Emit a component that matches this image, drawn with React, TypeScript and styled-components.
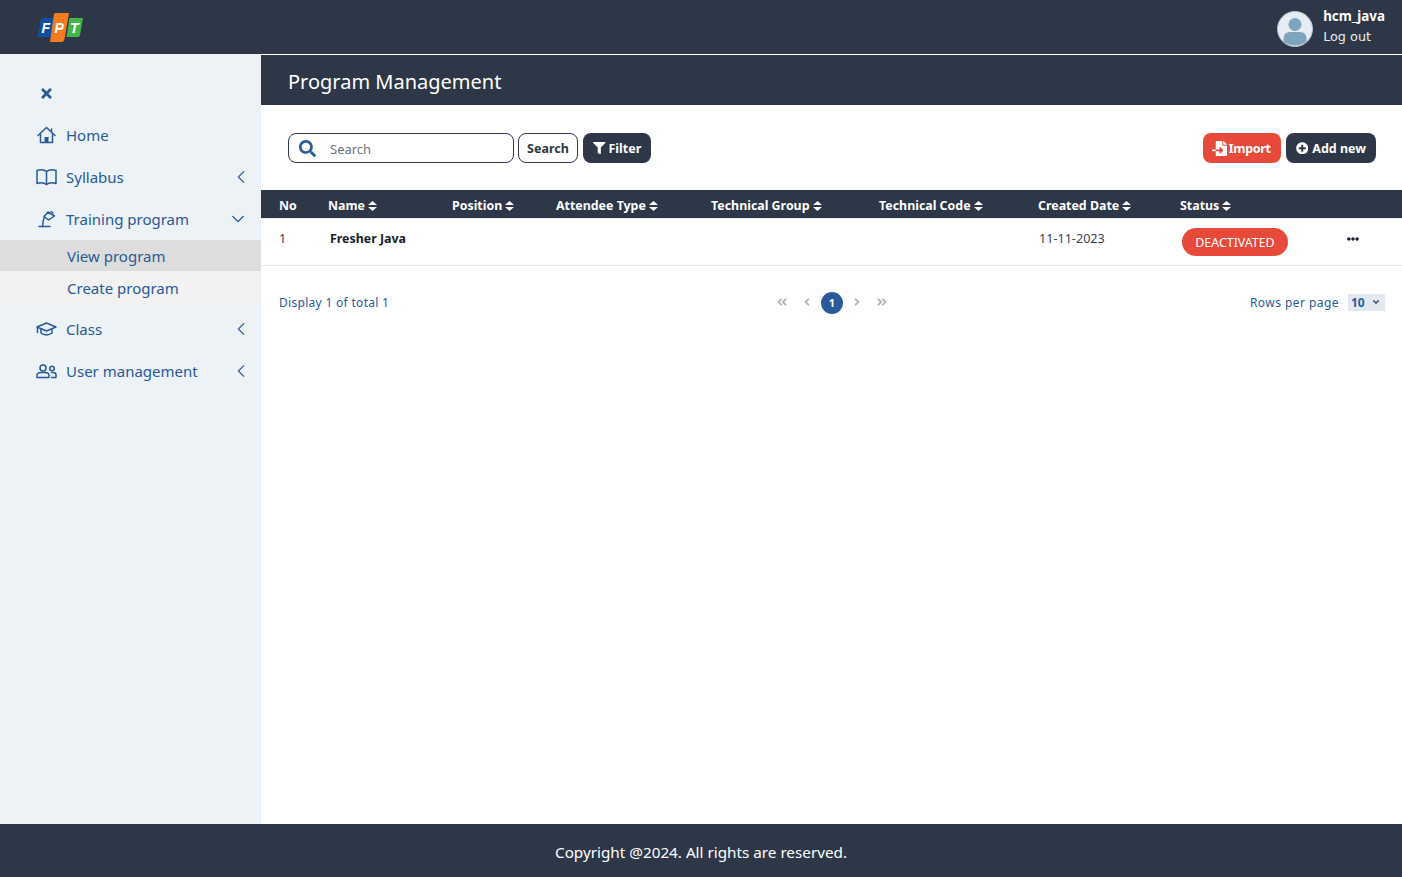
import React from 'react';
import styled, { createGlobalStyle } from 'styled-components';
import { BsChevronLeft, BsChevronDown } from 'react-icons/bs';
import {
    FaSearch,
    FaFilter,
    FaFileImport,
    FaPlusCircle,
    FaTimes,
    FaEllipsisH,
    FaAngleDoubleLeft,
    FaAngleDoubleRight,
    FaAngleLeft,
    FaAngleRight,
    FaAngleDown,
} from 'react-icons/fa';

const NAVY = '#2d3748';
const BLUE = '#285a98';
const RED = '#e74a3b';

const GlobalStyle = createGlobalStyle`
    * { box-sizing: border-box; }
    html, body { margin: 0; padding: 0; height: 100%; }
    body { font-family: "Noto Sans", "Open Sans", sans-serif; background: #fff; }
    #root { height: 100%; }
`;

const Page = styled.div`
    height: 877px;
    display: grid;
    grid-template-rows: 54px 1fr 53px;
    overflow: hidden;
`;

const Header = styled.header`
    background: ${NAVY};
    display: flex;
    align-items: center;
    justify-content: space-between;
    padding: 0 17px 0 37px;
`;

const UserBox = styled.div`
    display: flex;
    align-items: center;
    gap: 10px;
    padding-top: 3px;
`;

const UserText = styled.div`
    display: flex;
    flex-direction: column;
    gap: 1px;
    color: #fff;
`;

const UserName = styled.span`
    font-size: 13.4px;
    font-weight: 700;
    line-height: 19px;
    margin-top: -4px;
`;

const LogOut = styled.span`
    font-family: "DejaVu Sans", sans-serif;
    font-size: 12.8px;
    line-height: 19px;
    color: #e8ebef;
`;

const Body = styled.div`
    display: grid;
    grid-template-columns: 261px 1fr;
    min-height: 0;
`;

const Sidebar = styled.aside`
    background: #edf2f7;
    padding-top: 19px;
    color: ${BLUE};
`;

const CloseButton = styled.div`
    height: 41px;
    padding-left: 39px;
    display: flex;
    align-items: center;
    font-size: 15px;
`;

const NavRow = styled.div`
    height: 42px;
    display: flex;
    align-items: center;
    padding: 0 16px 0 36px;
    font-size: 15px;
`;

const SubGroup = styled.div`
    margin-bottom: 5px;
`;

const NavIcon = styled.span`
    width: 30px;
    display: flex;
    align-items: center;
`;

const Glyph = styled.svg.attrs({
    width: 21,
    height: 18,
    viewBox: '0 0 21 18',
    fill: 'none',
    stroke: 'currentColor',
    strokeWidth: 1.5,
    strokeLinecap: 'round',
    strokeLinejoin: 'round',
})`
    display: block;
`;

const NavLabel = styled.span`
    flex: 1;
`;

const Caret = styled.span<{ $collapsed?: boolean }>`
    display: flex;
    align-items: center;
    font-size: 14px;
    margin-right: ${({ $collapsed }) => ($collapsed ? '-3px' : '0')};
    svg { stroke: currentColor; stroke-width: 0.6; }
`;

const SubRow = styled.div<{ $active?: boolean }>`
    height: ${({ $active }) => ($active ? '31px' : '32px')};
    display: flex;
    align-items: center;
    padding: ${({ $active }) => ($active ? '0' : '2px')} 0 0 67px;
    font-size: 15px;
    background: ${({ $active }) => ($active ? '#dddddd' : '#f2f2f2')};
`;

const Main = styled.main`
    display: flex;
    flex-direction: column;
    min-width: 0;
    background: #fff;
`;

const TitleBar = styled.div`
    margin-top: 1px;
    height: 50px;
    background: ${NAVY};
    color: #fff;
    display: flex;
    align-items: center;
    padding: 3px 0 0 27px;
    font-size: 20px;
`;

const Toolbar = styled.div`
    height: 85px;
    display: flex;
    align-items: flex-start;
    justify-content: space-between;
    padding: 28px 26px 0 27px;
`;

const ToolGroup = styled.div`
    display: flex;
    gap: 5px;
`;

const SearchBox = styled.label`
    width: 226px;
    height: 30px;
    margin-right: -1px;
    border: 1px solid ${NAVY};
    border-radius: 8px;
    display: flex;
    align-items: center;
    padding-left: 10px;
    gap: 14px;
    color: ${BLUE};
    font-size: 17px;
`;

const SearchInput = styled.input`
    border: none;
    outline: none;
    flex: 1;
    min-width: 0;
    padding: 1px 0 0;
    background: none;
    font-family: inherit;
    font-size: 13px;
    &::placeholder {
        color: #6c757d;
        opacity: 1;
    }
`;

const OutlineButton = styled.button`
    height: 30px;
    width: 60px;
    padding: 1px 0 0;
    background: #fff;
    border: 1px solid ${NAVY};
    border-radius: 8px;
    color: ${NAVY};
    font-family: inherit;
    font-size: 12.5px;
    font-weight: 700;
`;

const FillButton = styled.button<{ $tone: string; $gap: number }>`
    height: 30px;
    padding: 0 10px;
    display: flex;
    align-items: center;
    gap: ${({ $gap }) => $gap}px;
    border: none;
    border-radius: 8px;
    background: ${({ $tone }) => $tone};
    color: #fff;
    font-family: inherit;
    font-size: 12.5px;
    font-weight: 700;
`;

const ImportIcon = styled(FaFileImport)`
    font-size: 15px;
    margin-left: -1px;
`;

const ImportLabel = styled.span`
    letter-spacing: -0.3px;
`;

const Table = styled.table`
    width: 100%;
    border-collapse: collapse;
    table-layout: fixed;
`;

const HeadRow = styled.tr`
    height: 28px;
    background: ${NAVY};
    color: #fff;
    border-bottom: 1px solid #e2e8f0;
`;

const Th = styled.th<{ $w?: number }>`
    ${({ $w }) => ($w ? `width: ${$w}px;` : '')}
    padding: 3px 0 0 18px;
    text-align: left;
    font-size: 12.4px;
    font-weight: 700;
    white-space: nowrap;
    &:not(:first-child) { padding-left: 0; }
`;

const SortIcon = styled.svg.attrs({ width: 9, height: 10, viewBox: '0 0 9 10', fill: 'currentColor' })`
    margin-left: 3px;
    vertical-align: -1px;
`;

const DataRow = styled.tr`
    height: 47px;
    border-bottom: 1px solid #e2e8f0;
`;

const Td = styled.td<{ $bold?: boolean; $inset?: number }>`
    padding: 0 0 7px ${({ $inset }) => $inset ?? 1}px;
    font-size: ${({ $bold }) => ($bold ? '12.4px' : '12.6px')};
    color: ${({ $bold }) => ($bold ? '#1a202c' : '#3a4350')};
    font-weight: ${({ $bold }) => ($bold ? 700 : 400)};
    white-space: nowrap;
`;

const StatusCell = styled.td`
    padding: 0 0 0 2px;
`;

const StatusInner = styled.div`
    display: flex;
    align-items: center;
    padding-top: 1px;
`;

const StatusPill = styled.span`
    width: 106px;
    height: 28px;
    border-radius: 14px;
    background: ${RED};
    color: #fff;
    font-size: 12.4px;
    display: flex;
    align-items: center;
    justify-content: center;
`;

const MoreIcon = styled.span`
    margin-left: 59px;
    margin-top: -7px;
    display: flex;
    color: #1a202c;
    font-size: 12px;
`;

const Pager = styled.div`
    display: grid;
    grid-template-columns: 1fr auto 1fr;
    align-items: center;
    padding: 25px 17px 0 18px;
    color: ${BLUE};
    font-size: 12px;
    letter-spacing: 0.3px;
`;

const PageButtons = styled.div`
    display: flex;
    align-items: center;
    color: #b4b4b4;
    font-size: 12px;
`;

const PageArrow = styled.span`
    width: 25px;
    display: flex;
    justify-content: center;
`;

const CurrentPage = styled.span`
    width: 22px;
    height: 22px;
    margin: 1px 1.5px 0;
    border-radius: 50%;
    background: ${BLUE};
    color: #fff;
    font-size: 11px;
    font-weight: 700;
    display: flex;
    align-items: center;
    justify-content: center;
`;

const RowsPerPage = styled.div`
    justify-self: end;
    display: flex;
    align-items: center;
    gap: 9px;
`;

const RowsLabel = styled.span`
    letter-spacing: 0.45px;
`;

const RowsSelect = styled.span`
    width: 37px;
    height: 17px;
    background: #e2e8f0;
    display: flex;
    align-items: center;
    justify-content: space-between;
    padding: 0 4px 0 3px;
    font-size: 12px;
    font-weight: 700;
    letter-spacing: 0;
    svg { font-size: 10px; color: #4a5f7f; }
`;

const Footer = styled.footer`
    background: ${NAVY};
    color: #fff;
    display: flex;
    align-items: center;
    justify-content: center;
    padding-top: 3px;
    font-size: 15.25px;
`;

const FptLogo = () => (
    <svg width="46" height="30" viewBox="0 0 46 30">
        <path d="M4 7 Q4.5 6 6 6 H17 L14 23 Q13.5 25 12 25 H0.5 Z" fill="#0e4fa1" />
        <path d="M17 2 Q17.5 1 19 1 H32 L27.5 27 Q27 30 24 30 H13 Z" fill="#f47b20" />
        <path d="M32.5 6 H46 L43 23 Q42.5 25 41 25 H29.5 Z" fill="#43b649" />
        <text x="4.5" y="20.5" fill="#fff" fontFamily="Liberation Sans" fontStyle="italic" fontWeight="700" fontSize="14">F</text>
        <text x="17.5" y="20.5" fill="#fff" fontFamily="Liberation Sans" fontStyle="italic" fontWeight="700" fontSize="14">P</text>
        <text x="33" y="20.5" fill="#fff" fontFamily="Liberation Sans" fontStyle="italic" fontWeight="700" fontSize="14">T</text>
    </svg>
);

const Avatar = () => (
    <svg width="36" height="36" viewBox="0 0 36 36">
        <circle cx="18" cy="18" r="17.5" fill="#e6ecf3" stroke="#b9c1cb" strokeWidth="1" />
        <circle cx="18" cy="13.5" r="6.5" fill="#7fa4bd" />
        <path d="M6.5 31 V27 Q7 21 13 21 H23 Q29 21 29.5 27 V31 Q18 38 6.5 31 Z" fill="#7fa4bd" />
    </svg>
);

const HomeGlyph = () => (
    <Glyph>
        <path d="M2 9.5 L10.5 1.5 L19 9.5" />
        <path d="M4.5 8 V16.5 H16.5 V8" />
        <path d="M15.5 3 V6" />
        <rect x="8.5" y="11" width="4" height="5.5" fill="currentColor" stroke="none" />
    </Glyph>
);

const BookGlyph = () => (
    <Glyph>
        <path d="M10.5 3.5 C8 1.5 4 1.5 1 2.5 V15.5 C4 14.5 8 14.5 10.5 16.5 C13 14.5 17 14.5 20 15.5 V2.5 C17 1.5 13 1.5 10.5 3.5 Z" />
        <path d="M10.5 3.5 V16.5" />
    </Glyph>
);

const LampGlyph = () => (
    <Glyph>
        <path d="M3 16.5 H14" />
        <path d="M6.5 16.5 C6.5 13 7 10 8.5 7" />
        <path d="M8 6.5 L12 2 L18.5 6 L12.5 10 Z" />
        <path d="M15 1.5 L17 3" />
    </Glyph>
);

const CapGlyph = () => (
    <Glyph>
        <path d="M1 7 L10.5 3 L20 7 L10.5 11 Z" />
        <path d="M5 9.5 V13 C8 15.5 13 15.5 16 13 V9.5" />
        <path d="M1.5 7 V12.5" />
    </Glyph>
);

const UsersGlyph = () => (
    <Glyph>
        <circle cx="7" cy="6" r="3" />
        <path d="M1 15.5 V13.5 C1 11.5 3 10.5 5 10.5 H9 C11 10.5 13 11.5 13 13.5 V15.5 Z" />
        <circle cx="16" cy="6.5" r="2.3" />
        <path d="M15.5 10.5 H17 C19 10.5 20 11.5 20 13 V15.5 H15.5" />
    </Glyph>
);

const Sort = () => (
    <SortIcon>
        <path d="M4.5 0 L9 4 H0 Z" />
        <path d="M4.5 10 L9 6 H0 Z" />
    </SortIcon>
);

const columns = [
    { label: 'Name', width: 124 },
    { label: 'Position', width: 104 },
    { label: 'Attendee Type', width: 155 },
    { label: 'Technical Group', width: 168 },
    { label: 'Technical Code', width: 159 },
    { label: 'Created Date', width: 142 },
];

export default function App() {
    return (
        <Page>
            <GlobalStyle />
            <Header>
                <FptLogo />
                <UserBox>
                    <Avatar />
                    <UserText>
                        <UserName>hcm_java</UserName>
                        <LogOut>Log out</LogOut>
                    </UserText>
                </UserBox>
            </Header>
            <Body>
                <Sidebar>
                    <CloseButton>
                        <FaTimes />
                    </CloseButton>
                    <NavRow>
                        <NavIcon><HomeGlyph /></NavIcon>
                        <NavLabel>Home</NavLabel>
                    </NavRow>
                    <NavRow>
                        <NavIcon><BookGlyph /></NavIcon>
                        <NavLabel>Syllabus</NavLabel>
                        <Caret $collapsed><BsChevronLeft /></Caret>
                    </NavRow>
                    <NavRow>
                        <NavIcon><LampGlyph /></NavIcon>
                        <NavLabel>Training program</NavLabel>
                        <Caret><BsChevronDown /></Caret>
                    </NavRow>
                    <SubGroup>
                        <SubRow $active>View program</SubRow>
                        <SubRow>Create program</SubRow>
                    </SubGroup>
                    <NavRow>
                        <NavIcon><CapGlyph /></NavIcon>
                        <NavLabel>Class</NavLabel>
                        <Caret $collapsed><BsChevronLeft /></Caret>
                    </NavRow>
                    <NavRow>
                        <NavIcon><UsersGlyph /></NavIcon>
                        <NavLabel>User management</NavLabel>
                        <Caret $collapsed><BsChevronLeft /></Caret>
                    </NavRow>
                </Sidebar>
                <Main>
                    <TitleBar>Program Management</TitleBar>
                    <Toolbar>
                        <ToolGroup>
                            <SearchBox>
                                <FaSearch />
                                <SearchInput placeholder="Search" />
                            </SearchBox>
                            <OutlineButton>Search</OutlineButton>
                            <FillButton $tone={NAVY} $gap={3}><FaFilter />Filter</FillButton>
                        </ToolGroup>
                        <ToolGroup>
                            <FillButton $tone={RED} $gap={2}><ImportIcon /><ImportLabel>Import</ImportLabel></FillButton>
                            <FillButton $tone={NAVY} $gap={4}><FaPlusCircle />Add new</FillButton>
                        </ToolGroup>
                    </Toolbar>
                    <Table>
                        <thead>
                            <HeadRow>
                                <Th $w={67}>No</Th>
                                {columns.map((c) => (
                                    <Th key={c.label} $w={c.width}>
                                        {c.label}
                                        <Sort />
                                    </Th>
                                ))}
                                <Th>Status<Sort /></Th>
                            </HeadRow>
                        </thead>
                        <tbody>
                            <DataRow>
                                <Td $inset={18}>1</Td>
                                <Td $bold $inset={2}>Fresher Java</Td>
                                <Td />
                                <Td />
                                <Td />
                                <Td />
                                <Td>11-11-2023</Td>
                                <StatusCell>
                                    <StatusInner>
                                        <StatusPill>DEACTIVATED</StatusPill>
                                        <MoreIcon><FaEllipsisH /></MoreIcon>
                                    </StatusInner>
                                </StatusCell>
                            </DataRow>
                        </tbody>
                    </Table>
                    <Pager>
                        <span>Display 1 of total 1</span>
                        <PageButtons>
                            <PageArrow><FaAngleDoubleLeft /></PageArrow>
                            <PageArrow><FaAngleLeft /></PageArrow>
                            <CurrentPage>1</CurrentPage>
                            <PageArrow><FaAngleRight /></PageArrow>
                            <PageArrow><FaAngleDoubleRight /></PageArrow>
                        </PageButtons>
                        <RowsPerPage>
                            <RowsLabel>Rows per page</RowsLabel>
                            <RowsSelect>10<FaAngleDown /></RowsSelect>
                        </RowsPerPage>
                    </Pager>
                </Main>
            </Body>
            <Footer>Copyright @2024. All rights are reserved.</Footer>
        </Page>
    );
}
